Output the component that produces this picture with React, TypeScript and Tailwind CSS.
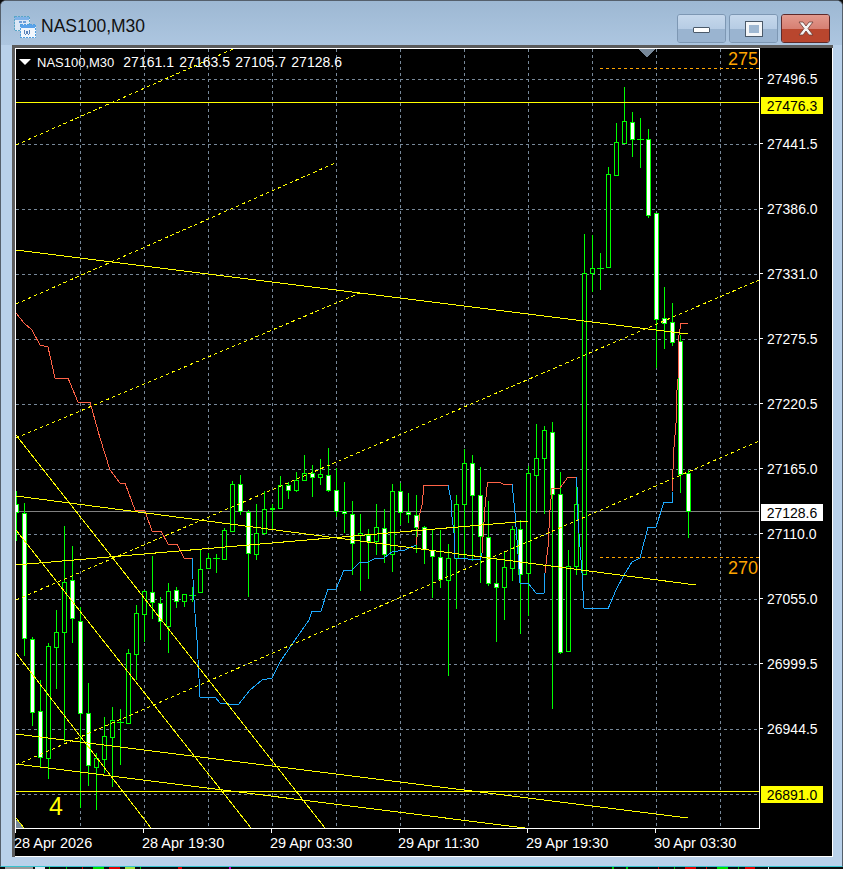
const FONT = "font-['Liberation_Sans',Arial,sans-serif]";

// x, high, low, body top, body bottom, filled
type Candle = [number, number, number, number, number, boolean];

const CANDLES: Candle[] = [
  [16, 491, 541, 504, 512, true],
  [24, 503, 656, 513, 638, true],
  [32, 637, 726, 639, 712, true],
  [40, 680, 768, 711, 757, true],
  [48, 643, 779, 646, 758, false],
  [56, 610, 689, 632, 647, false],
  [64, 526, 742, 582, 632, false],
  [72, 546, 643, 580, 618, true],
  [80, 607, 808, 621, 713, true],
  [88, 683, 786, 713, 765, true],
  [96, 753, 810, 758, 767, false],
  [104, 717, 773, 736, 759, false],
  [112, 707, 787, 720, 737, false],
  [120, 709, 765, 722, 722, false],
  [128, 649, 723, 653, 723, false],
  [136, 605, 680, 613, 654, false],
  [144, 590, 642, 591, 614, false],
  [152, 556, 619, 592, 602, true],
  [160, 597, 640, 603, 621, true],
  [168, 583, 653, 591, 626, false],
  [176, 587, 608, 590, 601, true],
  [184, 594, 607, 594, 601, false],
  [192, 587, 602, 595, 595, false],
  [200, 550, 592, 569, 592, false],
  [208, 553, 569, 558, 568, false],
  [216, 554, 573, 558, 558, false],
  [224, 528, 560, 530, 559, false],
  [232, 481, 531, 484, 531, false],
  [240, 475, 515, 484, 511, true],
  [248, 510, 597, 512, 553, true],
  [256, 504, 560, 533, 554, false],
  [264, 491, 535, 509, 533, false],
  [272, 504, 530, 508, 509, false],
  [280, 476, 508, 485, 508, false],
  [288, 482, 499, 485, 490, true],
  [296, 472, 492, 480, 490, false],
  [304, 455, 480, 473, 480, false],
  [312, 465, 497, 473, 477, true],
  [320, 459, 485, 474, 477, false],
  [328, 448, 492, 475, 490, true],
  [336, 468, 517, 490, 511, true],
  [344, 482, 533, 511, 513, true],
  [352, 501, 575, 514, 543, true],
  [360, 514, 591, 533, 535, false],
  [368, 529, 579, 535, 541, true],
  [376, 504, 555, 527, 541, false],
  [384, 509, 563, 528, 554, true],
  [392, 484, 572, 491, 554, false],
  [400, 483, 525, 491, 512, true],
  [408, 493, 523, 512, 514, true],
  [416, 495, 553, 515, 527, true],
  [424, 526, 564, 527, 549, true],
  [432, 530, 598, 550, 556, true],
  [440, 530, 588, 557, 579, true],
  [448, 544, 676, 558, 580, false],
  [456, 495, 609, 504, 558, false],
  [464, 449, 558, 463, 504, false],
  [472, 455, 561, 463, 495, true],
  [480, 467, 583, 495, 536, true],
  [488, 501, 586, 537, 583, true],
  [496, 559, 642, 583, 587, true],
  [504, 552, 620, 567, 587, false],
  [512, 526, 581, 529, 568, false],
  [520, 520, 634, 529, 574, true],
  [528, 466, 616, 473, 573, false],
  [536, 424, 513, 458, 475, false],
  [544, 426, 514, 430, 458, false],
  [552, 422, 709, 432, 494, true],
  [560, 472, 654, 494, 652, true],
  [568, 550, 651, 566, 651, false],
  [576, 486, 575, 504, 566, false],
  [584, 234, 574, 273, 574, false],
  [592, 235, 292, 268, 273, false],
  [600, 253, 290, 268, 268, false],
  [608, 167, 268, 174, 267, false],
  [616, 123, 175, 142, 175, false],
  [624, 87, 143, 121, 143, false],
  [632, 112, 157, 122, 139, true],
  [640, 118, 168, 139, 139, false],
  [648, 129, 218, 139, 215, true],
  [656, 213, 368, 213, 319, true],
  [664, 287, 349, 318, 323, true],
  [672, 303, 346, 322, 342, true],
  [680, 335, 493, 341, 474, true],
  [688, 470, 538, 473, 511, true],
];

const RED_PATHS = [
  '16,313 24,323 32,330 40,345 48,347 55,378 68,378 78,402 90,402 100,438 110,470 120,483 125,483 135,510 145,511 152,531 161,531 168,544 177,544 184,558 192,558',
  '416,545 420,513 422,505 424,485 448,485',
  '482,553 485,507 487,487 488,482 499,482 503,484 512,484',
  '545,573 548,547 550,510 552,488 560,488 568,477 576,477',
  '672,492 674,447 676,423 676,402 678,379 679,335 681,323 688,323',
];

const BLUE_PATHS = [
  '192,558 194,600 197,640 200,697 215,697 220,703 238,705 250,690 262,680 272,678 280,662 295,640 309,620 312,611 321,611 328,589 336,589 344,570 352,570 360,562 368,562 376,558 384,558 392,552 405,550 416,545',
  '448,485 451,500 452,517 454,533 455,558 480,560 482,553',
  '512,484 513,493 515,513 517,540 520,583 528,583 536,593 544,593 545,573',
  '576,477 577,487 578,520 582,573 584,608 597,608 608,609 616,590 624,575 632,562 640,558 648,527 656,527 664,502 672,502 672,492',
];

// yellow trend lines and channels, page coordinates
const SOLID_LINES = [
  [16, 250, 688, 334],
  [16, 496, 696, 585],
  [16, 565, 528, 521],
  [16, 734, 688, 818],
  [16, 764, 525, 828],
  [16, 435, 325, 828],
  [16, 530, 251, 828],
  [16, 653, 151, 828],
  [16, 818, 24, 828],
];

const DASHED_LINES = [
  [16, 145, 233, 49],
  [16, 304, 335, 163],
  [16, 438, 360, 293],
  [16, 600, 759, 280],
  [16, 765, 759, 441],
];

const GRID_Y = [79, 144, 209, 274, 339, 404, 469, 534, 599, 664, 729, 794];
const GRID_X = [80, 144, 208, 272, 336, 400, 464, 528, 592, 656, 720];

const PRICES = [
  '27496.5', '27441.5', '27386.0', '27331.0', '27275.5', '27220.5',
  '27165.0', '27110.0', '27055.0', '26999.5', '26944.5',
];

const TIMES = ['28 Apr 2026', '28 Apr 19:30', '29 Apr 03:30', '29 Apr 11:30', '29 Apr 19:30', '30 Apr 03:30'];

const OHLC = ['27161.1', '27163.5', '27105.7', '27128.6'];

// whatever sits behind the window at the very bottom edge of the shot
const BEHIND = [
  [5, 28, '#9a9a9a'], [35, 10, '#dfe6ee'], [49, 1, '#00c800'], [66, 1, '#00c800'], [82, 1, '#e00000'],
  [93, 11, '#00e000'], [109, 11, '#e00000'], [125, 10, '#a0e040'], [140, 1, '#00c800'], [178, 4, '#e00000'],
  [229, 2, '#d000d0'], [612, 2, '#00c800'], [626, 2, '#00c800'], [658, 1, '#e00000'], [674, 1, '#00c800'],
  [685, 11, '#e00000'], [706, 1, '#e00000'], [717, 11, '#00e000'], [738, 1, '#00c800'], [745, 10, '#e00000'],
  [768, 1, '#e0e0e0'],
] as const;

function Plot() {
  return (
    <svg viewBox="16 49 743 779" className="block h-[779px] w-[743px]" shapeRendering="crispEdges">
      {GRID_Y.map(y => (
        <line key={y} x1={16} x2={759} y1={y + 0.5} y2={y + 0.5} stroke="#778899" strokeDasharray="3 3" />
      ))}
      {GRID_X.map(x => (
        <line key={x} x1={x + 0.5} x2={x + 0.5} y1={49} y2={828} stroke="#778899" strokeDasharray="3 3" />
      ))}
      <polygon points="16,820 24,828 16,828" fill="#778899" />
      <polygon points="638,49 655,49 647,57" fill="#778899" />
      <line x1={16} x2={759} y1={511.5} y2={511.5} stroke="#808080" />
      {CANDLES.map(([x, high, low, top, bottom, filled]) => (
        <g key={x}>
          <line x1={x + 0.5} x2={x + 0.5} y1={high} y2={low} stroke="#00ff00" />
          {top === bottom ? (
            <line x1={x - 3} x2={x + 4} y1={top + 0.5} y2={top + 0.5} stroke="#00ff00" />
          ) : (
            <rect
              x={x - 1.5}
              y={top + 0.5}
              width={4}
              height={bottom - top}
              fill={filled ? '#ffffff' : '#000000'}
              stroke="#00ff00"
            />
          )}
        </g>
      ))}
      {RED_PATHS.map(p => (
        <polyline key={p} points={p} fill="none" stroke="#ff6347" />
      ))}
      {BLUE_PATHS.map(p => (
        <polyline key={p} points={p} fill="none" stroke="#1eaaff" />
      ))}
      {SOLID_LINES.map(([x1, y1, x2, y2]) => (
        <line key={`${x1}-${y1}`} x1={x1} y1={y1} x2={x2} y2={y2} stroke="#ffff00" />
      ))}
      {DASHED_LINES.map(([x1, y1, x2, y2]) => (
        <line key={`${x1}-${y1}`} x1={x1} y1={y1} x2={x2} y2={y2} stroke="#ffff00" strokeDasharray="3.5 3" />
      ))}
      <line x1={16} x2={759} y1={102.5} y2={102.5} stroke="#ffff00" />
      <line x1={16} x2={759} y1={791.5} y2={791.5} stroke="#ffff00" />
      <line x1={600} x2={759} y1={68.5} y2={68.5} stroke="#ffa500" strokeDasharray="3 3" />
      <line x1={600} x2={759} y1={557.5} y2={557.5} stroke="#ffa500" strokeDasharray="3 3" />
    </svg>
  );
}

function PriceTag({ price, className }: { price: string; className: string }) {
  return (
    <span
      className={`absolute left-[1px] flex h-[17px] w-[62px] items-center justify-center text-[14px] leading-none ${className}`}
    >
      {price}
    </span>
  );
}

function Chart() {
  return (
    <div className={`flex h-full bg-black text-white ${FONT}`}>
      <div className="flex w-[745px] flex-col">
        <div className="relative border border-white">
          <Plot />
          <div className="absolute left-[3px] top-[6px] flex items-center text-[14px] leading-none">
            <svg width="12" height="6" viewBox="0 0 12 6" className="mr-[6px]">
              <polygon points="0,0 12,0 6,6" fill="#ffffff" />
            </svg>
            <span className="mr-[9px] text-[13px]">NAS100,M30</span>
            <div className="flex gap-[5.4px]">
              {OHLC.map(v => (
                <span key={v}>{v}</span>
              ))}
            </div>
          </div>
          <span className="absolute right-[1px] top-[1px] text-[18px] leading-[18px] text-[#ffa500]">275</span>
          <span className="absolute right-[1px] top-[510px] text-[18px] leading-[18px] text-[#ffa500]">270</span>
          <span className="absolute left-[33px] top-[745px] text-[25px] leading-[25px] text-[#ffff00]">4</span>
        </div>
        <div className="flex">
          {TIMES.map(t => (
            <div key={t} className="w-[128px] shrink-0 text-[14.5px] leading-none">
              <div className="h-[4px] w-px bg-white" />
              <div className="mt-[3px] -ml-px">{t}</div>
            </div>
          ))}
        </div>
      </div>
      <div className="relative flex flex-1 flex-col text-[14px] leading-none">
        {PRICES.map((p, i) => (
          <div key={p} className={`flex h-[65px] items-center ${i === 0 ? 'mt-[-2px]' : ''}`}>
            <div className="h-px w-[3px] bg-white" />
            <span className="ml-[4px]">{p}</span>
          </div>
        ))}
        <PriceTag price="27476.3" className="top-[49px] bg-[#ffff00] text-black" />
        <PriceTag price="27128.6" className="top-[456px] bg-white text-black" />
        <PriceTag price="26891.0" className="top-[738px] bg-[#ffff00] text-black" />
      </div>
    </div>
  );
}

function WindowIcon() {
  return (
    <svg width="22" height="22" viewBox="0 0 22 22" className="shrink-0" shapeRendering="crispEdges">
      <rect x="0.5" y="0.5" width="15" height="14" fill="#dce8f6" stroke="#58a6c8" strokeDasharray="2 1" />
      <rect x="1" y="1" width="14" height="3" fill="#7fb2e8" />
      <rect x="5" y="4.5" width="3" height="2" fill="#6f9fd8" />
      <rect x="9" y="4.5" width="3" height="2" fill="#6f9fd8" />
      <rect x="6.5" y="8.5" width="15" height="13" fill="#f2f7fd" stroke="#4f9fe0" strokeDasharray="2 1" />
      <rect x="7" y="9" width="14" height="3" fill="#5aa2ea" />
      <path d="M10 14l1 4h1l1-3 1 3h1l1-4" fill="none" stroke="#5b82b8" />
    </svg>
  );
}

function CaptionButton({ kind }: { kind: 'min' | 'max' | 'close' }) {
  const isClose = kind === 'close';
  return (
    <button
      className={`relative flex h-[29px] w-[49px] items-center justify-center overflow-hidden rounded-[3px] border ${
        isClose ? 'border-[#5f2a2a]' : 'border-[#7d97b3]'
      }`}
    >
      <span className="absolute inset-0 flex flex-col">
        <span className={`h-[14px] ${isClose ? 'bg-gradient-to-b from-[#e39a8e] to-[#d67f72]' : 'bg-gradient-to-b from-[#c6d8ec] to-[#b6cce4]'}`} />
        <span className={`flex-1 ${isClose ? 'bg-[#b9462e]' : 'bg-[#9ab4d0]'}`} />
      </span>
      {kind === 'min' && (
        <span className="relative mt-[2px] h-[6px] w-[17px] rounded-[1px] border border-[#4b5a6a] bg-white" />
      )}
      {kind === 'max' && (
        <span className="relative h-[14px] w-[16px] border-[3px] border-[#f4f6f8] bg-[#9fb8d2] outline outline-1 outline-[#4b5a6a]" />
      )}
      {isClose && (
        <svg width="18" height="15" viewBox="0 0 18 15" className="relative">
          <path d="M2 1h4l3 4 3-4h4l-5 6.5 5 6.5h-4l-3-4-3 4H2l5-6.5z" fill="#f4f4f4" stroke="#6a3a34" strokeWidth="0.8" />
        </svg>
      )}
    </button>
  );
}

export default function App() {
  return (
    <div className="h-[869px] w-[843px] overflow-hidden bg-[#0c0c0c]">
      <div className="flex h-[867px] flex-col rounded-t-[6px] border border-[#55606c] border-b-[#36c3d0] bg-[#b9d1ea]">
        <div className="flex h-[44px] items-start justify-between rounded-t-[5px] bg-gradient-to-b from-[#9db8d3] to-[#adc6e0] pl-[13px] pr-[12px]">
          <div className="mt-[15px] flex items-center gap-[5px]">
            <WindowIcon />
            <span className="font-['Liberation_Sans',Arial,sans-serif] text-[17.5px] leading-none text-[#111111]">NAS100,M30</span>
          </div>
          <div className="mt-[13px] flex gap-[3px]">
            <CaptionButton kind="min" />
            <CaptionButton kind="max" />
            <CaptionButton kind="close" />
          </div>
        </div>
        <div className="flex-1 pb-[9px] pl-[11px] pr-[9px]">
          <div className="h-full border-[3px] border-r-0 border-b-0 border-[#5b5b5b]">
            <div className="h-full border-b border-r border-white">
              <Chart />
            </div>
          </div>
        </div>
      </div>
      <svg width="843" height="2" viewBox="0 0 843 2" className="block" shapeRendering="crispEdges">
        {BEHIND.map(([x, w, c]) => (
          <rect key={x} x={x} y={0} width={w} height={2} fill={c} />
        ))}
      </svg>
    </div>
  );
}
